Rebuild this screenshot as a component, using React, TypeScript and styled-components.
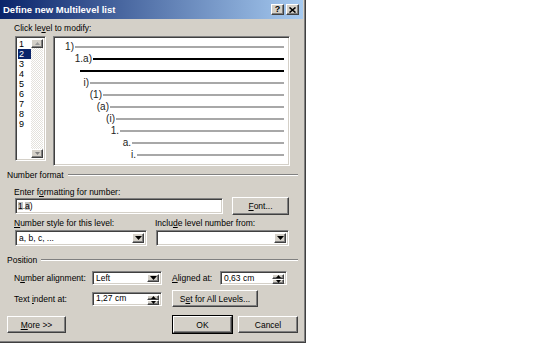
import styled, { createGlobalStyle } from "styled-components";

const GlobalStyle = createGlobalStyle`
  body {
    margin: 0;
    background: #fff;
  }
  * {
    box-sizing: border-box;
  }
`;

const raised = `
  background: #d4d0c8;
  border-top: 1px solid #fff;
  border-left: 1px solid #fff;
  border-right: 1px solid #404040;
  border-bottom: 1px solid #404040;
  box-shadow: inset -1px -1px #808080;
`;

const sunken = `
  background: #fff;
  border-top: 1px solid #808080;
  border-left: 1px solid #808080;
  border-right: 1px solid #fff;
  border-bottom: 1px solid #fff;
  box-shadow: inset 1px 1px #404040, inset -1px -1px #d4d0c8;
`;

const Dialog = styled.div`
  width: 306px;
  height: 343px;
  background: #d4d0c8;
  border-right: 1px solid #404040;
  border-bottom: 1px solid #404040;
  box-shadow: inset -1px -1px #808080;
  display: flex;
  flex-direction: column;
  font-family: "Liberation Sans", Arial, sans-serif;
  font-size: 8.5px;
  color: #000;
`;

const TitleBar = styled.div`
  height: 19px;
  margin-right: 2px;
  padding: 0 4px 0 3px;
  display: flex;
  align-items: center;
  justify-content: space-between;
  background: linear-gradient(to right, #0a246a, #a6caf0);
`;

const Title = styled.span`
  color: #fff;
  font-weight: bold;
  font-size: 9.5px;
`;

const TitleButtons = styled.div`
  display: flex;
  gap: 2px;
`;

const TitleButton = styled.div`
  ${raised}
  width: 13px;
  height: 11px;
  display: flex;
  align-items: center;
  justify-content: center;
  font-weight: bold;
  font-size: 9px;
  line-height: 1;
`;

const Body = styled.div`
  flex: 1;
  padding: 0 7px 0 7px;
  display: flex;
  flex-direction: column;
`;

const Label = styled.div<{ $top?: number; $left?: number }>`
  margin-top: ${(p) => p.$top ?? 0}px;
  padding-left: ${(p) => p.$left ?? 7}px;
  height: 10px;
  line-height: 10px;
  white-space: nowrap;
`;

const LevelRow = styled.div`
  margin-top: 3px;
  padding-left: 8px;
  display: flex;
  align-items: flex-start;
  gap: 7px;
`;

const ListBox = styled.div`
  ${sunken}
  width: 31px;
  height: 125px;
  padding: 2px;
  display: flex;
`;

const ListItems = styled.div`
  flex: 1;
`;

const ListItem = styled.div<{ $selected?: boolean }>`
  height: 10px;
  line-height: 10px;
  font-size: 9px;
  padding-left: 1px;
  background: ${(p) => (p.$selected ? "#0a246a" : "transparent")};
  color: ${(p) => (p.$selected ? "#fff" : "#000")};
`;

const ScrollBar = styled.div`
  width: 12px;
  display: flex;
  flex-direction: column;
  justify-content: space-between;
  background: repeating-conic-gradient(#fff 0 25%, #e4e2dc 0 50%) 0 0 / 2px 2px;
`;

const ScrollButton = styled.div`
  ${raised}
  height: 9px;
  display: flex;
  align-items: center;
  justify-content: center;
`;

const Preview = styled.div`
  ${sunken}
  width: 237px;
  height: 130px;
  padding: 4px 5px 0 0;
`;

const PreviewRow = styled.div`
  height: 12px;
  display: flex;
  align-items: center;
`;

const PreviewLabel = styled.span<{ $width: number }>`
  width: ${(p) => p.$width}px;
  flex: none;
  text-align: right;
  font-size: 10px;
  line-height: 12px;
  color: #222;
  padding-right: 1px;
`;

const PreviewLine = styled.div<{ $active?: boolean }>`
  flex: 1;
  height: 2px;
  background: ${(p) => (p.$active ? "#000" : "#a8a8a8")};
`;

const GroupHeader = styled.div<{ $top: number }>`
  margin-top: ${(p) => p.$top}px;
  height: 10px;
  line-height: 10px;
  display: flex;
  align-items: center;
  gap: 4px;
`;

const GroupRule = styled.div`
  flex: 1;
  height: 2px;
  border-top: 1px solid #808080;
  border-bottom: 1px solid #fff;
`;

const FormatRow = styled.div`
  padding-left: 8px;
  display: flex;
  align-items: center;
  gap: 9px;
  height: 18px;
`;

const TextField = styled.div<{ $width: number; $height?: number }>`
  ${sunken}
  width: ${(p) => p.$width}px;
  height: ${(p) => p.$height ?? 16}px;
  padding: 0 2px 0 2px;
  display: flex;
  align-items: center;
  white-space: nowrap;
  line-height: 1;
`;

const Shade = styled.span`
  background: #c0c0c0;
`;

const Button = styled.div<{ $width: number; $height?: number; $default?: boolean }>`
  ${raised}
  width: ${(p) => p.$width}px;
  height: ${(p) => p.$height ?? 17}px;
  display: flex;
  align-items: center;
  justify-content: center;
  white-space: nowrap;
  ${(p) => (p.$default ? `outline: 1px solid #000;` : "")}
`;

const StyleGrid = styled.div`
  margin-top: 3px;
  padding-left: 8px;
  display: grid;
  grid-template-columns: 132px 133px;
  column-gap: 9px;
  row-gap: 2px;
`;

const GridLabel = styled.div`
  height: 10px;
  line-height: 10px;
  margin-left: -1px;
  white-space: nowrap;
`;

const Field = styled.div<{ $height: number }>`
  ${sunken}
  height: ${(p) => p.$height}px;
  display: flex;
  align-items: center;
  padding: 2px;
`;

const FieldText = styled.span`
  flex: 1;
  padding-left: 1px;
  white-space: nowrap;
  line-height: 1;
`;

const DropButton = styled.div`
  ${raised}
  width: 12px;
  align-self: stretch;
  display: flex;
  align-items: center;
  justify-content: center;
`;

const Spin = styled.div`
  width: 12px;
  align-self: stretch;
  display: flex;
  flex-direction: column;
`;

const SpinHalf = styled.div`
  ${raised}
  flex: 1;
  display: flex;
  align-items: center;
  justify-content: center;
`;

const PositionGrid = styled.div`
  margin-top: 6px;
  padding-left: 7px;
  display: grid;
  grid-template-columns: 78px 70px 58px 67px;
  grid-template-rows: 14px 17px;
  row-gap: 5px;
  align-items: center;
`;

const PosLabel = styled.div<{ $indent?: number }>`
  white-space: nowrap;
  margin-left: ${(p) => p.$indent ?? 0}px;
`;

const SpanCell = styled.div`
  grid-column: 3 / span 2;
  padding-left: 10px;
`;

const Footer = styled.div`
  margin-top: 9px;
  display: flex;
  justify-content: space-between;
  align-items: center;
`;

const FooterRight = styled.div`
  display: flex;
  gap: 6px;
`;

const Tri = ({ dir, color = "#000", w = 7, h = 4 }: { dir: "up" | "down"; color?: string; w?: number; h?: number }) => (
  <svg width={w} height={h} viewBox={`0 0 ${w} ${h}`}>
    <polygon
      points={dir === "down" ? `0,0 ${w},0 ${w / 2},${h}` : `0,${h} ${w},${h} ${w / 2},0`}
      fill={color}
    />
  </svg>
);

const previewRows: { label: string; width: number; active?: boolean }[] = [
  { label: "1)", width: 21 },
  { label: "1.a)", width: 39, active: true },
  { label: "", width: 26, active: true },
  { label: "i)", width: 36 },
  { label: "(1)", width: 49 },
  { label: "(a)", width: 56 },
  { label: "(i)", width: 62 },
  { label: "1.", width: 66 },
  { label: "a.", width: 78 },
  { label: "i.", width: 83 },
];

const levels = ["1", "2", "3", "4", "5", "6", "7", "8", "9"];

const SpinButtons = () => (
  <Spin>
    <SpinHalf>
      <Tri dir="up" w={5} h={3} />
    </SpinHalf>
    <SpinHalf>
      <Tri dir="down" w={5} h={3} />
    </SpinHalf>
  </Spin>
);

const App = () => {
  return (
    <>
      <GlobalStyle />
      <Dialog>
        <TitleBar>
          <Title>Define new Multilevel list</Title>
          <TitleButtons>
            <TitleButton>?</TitleButton>
            <TitleButton>
              <svg width="7" height="6" viewBox="0 0 7 6">
                <path d="M0.5 0.5 L6.5 5.5 M6.5 0.5 L0.5 5.5" stroke="#000" strokeWidth="1.6" />
              </svg>
            </TitleButton>
          </TitleButtons>
        </TitleBar>
        <Body>
          <Label $top={4}>
            Click le<u>v</u>el to modify:
          </Label>
          <LevelRow>
            <ListBox>
              <ListItems>
                {levels.map((l) => (
                  <ListItem key={l} $selected={l === "2"}>
                    {l}
                  </ListItem>
                ))}
              </ListItems>
              <ScrollBar>
                <ScrollButton>
                  <Tri dir="up" color="#9a9a9a" w={5} h={3} />
                </ScrollButton>
                <ScrollButton>
                  <Tri dir="down" color="#808080" w={5} h={3} />
                </ScrollButton>
              </ScrollBar>
            </ListBox>
            <Preview>
              {previewRows.map((r, i) => (
                <PreviewRow key={i}>
                  <PreviewLabel $width={r.width}>{r.label}</PreviewLabel>
                  <PreviewLine $active={r.active} />
                </PreviewRow>
              ))}
            </Preview>
          </LevelRow>

          <GroupHeader $top={4}>
            Number format
            <GroupRule />
          </GroupHeader>
          <Label $top={7}>
            Enter f<u>o</u>rmatting for number:
          </Label>
          <FormatRow>
            <TextField $width={208}>
              <Shade>1</Shade>.<Shade>a</Shade>)
            </TextField>
            <Button $width={57} $height={18}>
              <u>F</u>ont...
            </Button>
          </FormatRow>
          <StyleGrid>
            <GridLabel>
              <u>N</u>umber style for this level:
            </GridLabel>
            <GridLabel>
              Inclu<u>d</u>e level number from:
            </GridLabel>
            <Field $height={16}>
              <FieldText>a, b, c, ...</FieldText>
              <DropButton>
                <Tri dir="down" />
              </DropButton>
            </Field>
            <Field $height={16}>
              <FieldText />
              <DropButton>
                <Tri dir="down" />
              </DropButton>
            </Field>
          </StyleGrid>

          <GroupHeader $top={9}>
            Position
            <GroupRule />
          </GroupHeader>
          <PositionGrid>
            <PosLabel>
              N<u>u</u>mber alignment:
            </PosLabel>
            <Field $height={14}>
              <FieldText>Left</FieldText>
              <DropButton>
                <Tri dir="down" />
              </DropButton>
            </Field>
            <PosLabel $indent={10}>
              <u>A</u>ligned at:
            </PosLabel>
            <Field $height={14}>
              <FieldText>0,63 cm</FieldText>
              <SpinButtons />
            </Field>
            <PosLabel>
              Text <u>i</u>ndent at:
            </PosLabel>
            <Field $height={14}>
              <FieldText>1,27 cm</FieldText>
              <SpinButtons />
            </Field>
            <SpanCell>
              <Button $width={86} $height={17}>
                S<u>e</u>t for All Levels...
              </Button>
            </SpanCell>
          </PositionGrid>

          <Footer>
            <Button $width={59} $height={17}>
              <u>M</u>ore &gt;&gt;
            </Button>
            <FooterRight>
              <Button $width={59} $height={17} $default>
                OK
              </Button>
              <Button $width={60} $height={17}>
                Cancel
              </Button>
            </FooterRight>
          </Footer>
        </Body>
      </Dialog>
    </>
  );
};

export default App;
